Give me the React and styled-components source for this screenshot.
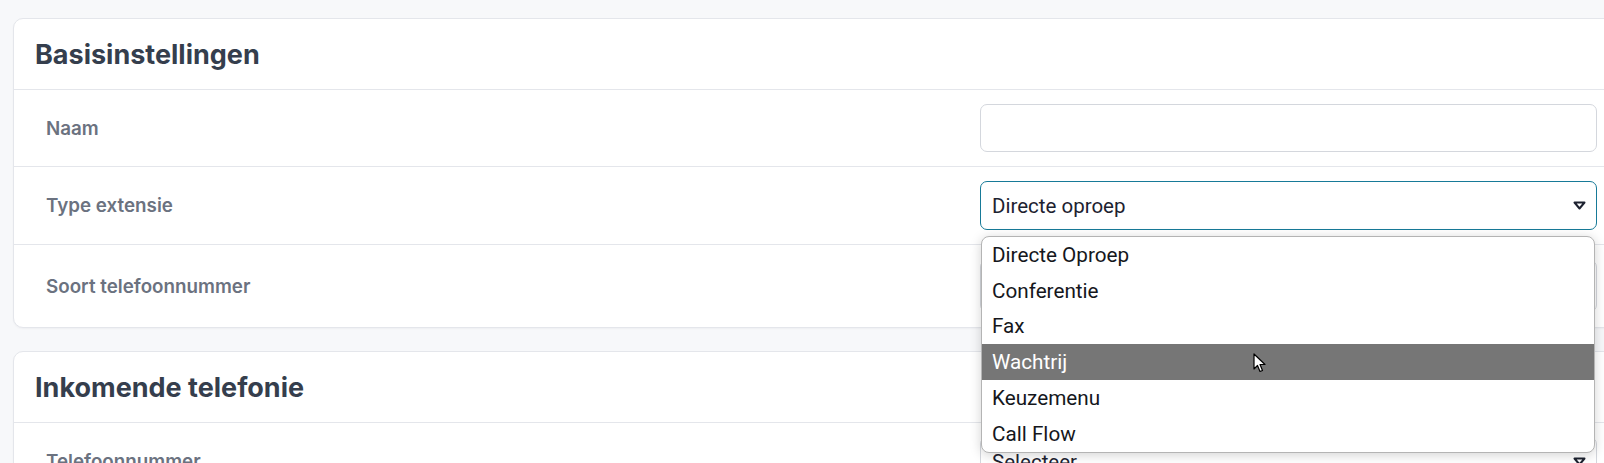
import React from 'react';
import styled, { createGlobalStyle } from 'styled-components';

const GlobalStyle = createGlobalStyle`
  html, body {
    margin: 0;
    padding: 0;
    background: #f7f8fa;
    overflow: hidden;
    font-family: Inter, "Noto Sans", sans-serif;
  }
`;

const Page = styled.div`
  padding: 18px 0 0 13px;
  display: flex;
  flex-direction: column;
  gap: 23px;
`;

const Card = styled.section`
  margin-right: -26px;
  background: #fff;
  border: 1px solid #e4e6eb;
  border-radius: 10px;
  box-shadow: 0 1px 2px rgba(16, 24, 40, 0.04);
`;

const CardHeader = styled.div`
  height: 70px;
  display: flex;
  align-items: center;
  padding: 0 21px;
  border-bottom: 1px solid #e4e6eb;
`;

const CardTitle = styled.h2`
  margin: 0;
  font-size: 27px;
  font-weight: 700;
  color: #353e4d;
`;

const Row = styled.div`
  display: grid;
  grid-template-columns: 1fr 617px;
  align-items: center;
  padding: ${p => p.$pad || '14px'} 32px;
  border-top: ${p => (p.$first ? 'none' : '1px solid #e4e6eb')};
`;

const Label = styled.label`
  font-size: 18.8px;
  font-weight: 600;
  color: #6b7280;
`;

const Field = styled.div`
  position: relative;
`;

const TextInput = styled.div`
  height: 46px;
  border: 1px solid #d4d7dd;
  border-radius: 7px;
  background: #fff;
`;

const SelectBox = styled.div`
  height: ${p => p.$h || 47}px;
  display: flex;
  align-items: center;
  justify-content: space-between;
  padding: 0 10px 0 11px;
  border: 1px solid ${p => (p.$focus ? '#177a98' : '#d4d7dd')};
  border-radius: 7px;
  background: #fff;
  font-family: Roboto, "Liberation Sans", sans-serif;
  font-size: 20.5px;
  color: #1d2230;
`;

const Caret = () => (
  <svg width="13" height="9" viewBox="0 0 13 9">
    <path d="M1.5 1.5 H11.5 L6.5 7.5 Z" fill="none" stroke="#1d2230" strokeWidth="2" strokeLinejoin="round" />
  </svg>
);

const Dropdown = styled.ul`
  position: absolute;
  top: calc(100% + 6px);
  left: 1px;
  right: 2px;
  z-index: 10;
  margin: 0;
  padding: 0;
  list-style: none;
  background: #fff;
  border: 1px solid #b4b4b4;
  border-radius: 8px;
  overflow: hidden;
  box-shadow: 0 2px 12px rgba(0, 0, 0, 0.18);
`;

const Option = styled.li`
  height: 35.8px;
  display: flex;
  align-items: center;
  padding-left: 10px;
  font-family: Roboto, "Liberation Sans", sans-serif;
  font-size: 20.7px;
  color: ${p => (p.$active ? '#fff' : '#15171c')};
  background: ${p => (p.$active ? '#767676' : 'transparent')};
  position: relative;
`;

const Pointer = styled.svg`
  position: absolute;
  left: 271px;
  top: 9px;
`;

const options = ['Directe Oproep', 'Conferentie', 'Fax', 'Wachtrij', 'Keuzemenu', 'Call Flow'];

export default function App() {
  return (
    <>
      <GlobalStyle />
      <Page>
        <Card>
          <CardHeader>
            <CardTitle>Basisinstellingen</CardTitle>
          </CardHeader>
          <Row $first>
            <Label>Naam</Label>
            <TextInput />
          </Row>
          <Row>
            <Label>Type extensie</Label>
            <Field>
              <SelectBox $focus>
                <span>Directe oproep</span>
                <Caret />
              </SelectBox>
              <Dropdown>
                {options.map(o => (
                  <Option key={o} $active={o === 'Wachtrij'}>
                    {o}
                    {o === 'Wachtrij' && (
                      <Pointer width="13" height="20" viewBox="0 0 13 20">
                        <path d="M1 1 L1 16 L4.5 12.5 L7 18.5 L9.5 17.5 L7 11.5 L12 11.5 Z" fill="#fff" stroke="#000" strokeWidth="1.2" strokeLinejoin="round" />
                      </Pointer>
                    )}
                  </Option>
                ))}
              </Dropdown>
            </Field>
          </Row>
          <Row $pad="15px">
            <Label>Soort telefoonnummer</Label>
            <SelectBox $h={50}>
              <span>Selecteer</span>
              <Caret />
            </SelectBox>
          </Row>
        </Card>
        <Card>
          <CardHeader>
            <CardTitle>Inkomende telefonie</CardTitle>
          </CardHeader>
          <Row $first>
            <Label>Telefoonnummer</Label>
            <SelectBox>
              <span>Selecteer</span>
              <Caret />
            </SelectBox>
          </Row>
        </Card>
      </Page>
    </>
  );
}
